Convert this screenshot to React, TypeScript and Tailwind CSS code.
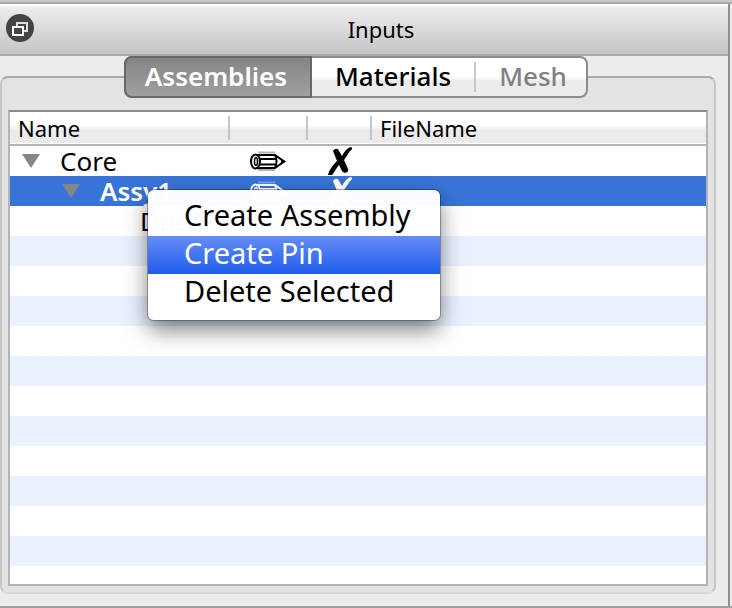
import type { ReactNode } from "react";

const headText = "text-[22px] leading-7 font-normal";

function Pencil({ className }: { className: string }) {
  return (
    <svg viewBox="0 0 36 20" className={`h-5 w-9 ${className}`} fill="none" stroke="currentColor" aria-hidden="true">
      <path d="M8 1.500H25M8 19H25" strokeWidth="2" opacity=".3" />
      <path d="M6 4H25L34 10.500L25 17H6" strokeWidth="2" />
      <path d="M9 8H26M9 13.500H26" strokeWidth="2" />
      <ellipse cx="5.500" cy="10.500" rx="4.500" ry="7" strokeWidth="2" />
      <ellipse cx="6" cy="10.500" rx="1.500" ry="4" strokeWidth="1.500" />
      <path d="M25 4Q28 10.500 25 17" strokeWidth="2" />
      <path d="M31 7.500L36 10.500L31 13.500Z" fill="currentColor" stroke="none" />
    </svg>
  );
}

function Cross({ className }: { className: string }) {
  return (
    <svg viewBox="0 0 24 28" className={`h-7 w-6 ${className}`} fill="currentColor" aria-hidden="true">
      <path d="M5 4C7 1 10 1 11 4L14 9C16 5 19 1 23 0C25 1 24 3 22 4L16 13L20 22C21 26 16 27 14 24L11 18C8 21 7 25 4 28H0C1 23 5 18 9 14Z" />
    </svg>
  );
}

function Triangle() {
  return (
    <svg viewBox="0 0 18 14" className="h-3.5 w-[18px] shrink-0 fill-[#868686]" aria-hidden="true">
      <path d="M0 0H18L9 14Z" />
    </svg>
  );
}

function HeadCell({ children, divider = true }: { children?: ReactNode; divider?: boolean }) {
  return (
    <th scope="col" className={`h-[33px] p-0 text-left ${headText}`}>
      <div className={`flex h-6 items-center ${divider ? "border-r-2 border-[#c6c6c6]" : ""}`}>
        <span className="px-2">{children}</span>
      </div>
    </th>
  );
}

const menuItem = "block h-[38px] w-full pb-1 pl-9 text-left text-[29px] leading-[34px]";

export default function App() {
  return (
    <main className="flex min-h-screen flex-col border-b-2 border-[#a0a0a0] bg-[#ececec] font-['Noto_Sans',sans-serif] text-black">
      <div className="h-1 shrink-0 border-b-2 border-[#aaaaaa] bg-[#c8c8c8]" />
      <section className="mr-0.5 flex flex-1 flex-col border-r-2 border-[#909090]">
        <header className="flex h-13 items-center border-t-2 border-b-2 border-t-white border-b-[#aaaaaa] bg-linear-to-b from-[#eeeeee] to-[#c5c5c5] pb-1 pl-1.5">
          <button aria-label="Float panel" className="size-7">
            <svg viewBox="0 0 28 28" className="size-7" fill="none" aria-hidden="true">
              <circle cx="14" cy="14" r="14" fill="#444" />
              <path d="M11 12V9H21V17H18" stroke="#ddd" strokeWidth="2" />
              <path d="M7 13H17V21H7Z" stroke="#fff" strokeWidth="2" />
            </svg>
          </button>
          <h1 className={`flex-1 pt-0.5 text-center ${headText}`}>Inputs</h1>
        </header>

        <div className="mr-3 mb-3 flex flex-1 flex-col">
          <div role="tablist" className="relative z-10 -mb-[22px] flex justify-center pr-1 text-[26px] leading-8 font-medium">
            <div className="flex h-[42px] rounded-lg border-2 border-[#8c8c8c] bg-linear-to-b from-white from-50% to-[#ececec] to-60%">
              <button role="tab" aria-selected="true" className="-m-0.5 w-[188px] rounded-l-lg border-2 border-[#686868] bg-linear-to-b from-[#858585] to-[#a0a0a0] pr-1 pb-0.5 font-semibold text-white">
                Assemblies
              </button>
              <button role="tab" aria-selected="false" className="my-1 ml-0.5 w-[164px] border-r-2 border-[#c8c8c8] pb-0.5">
                <span className="-my-1 block">Materials</span>
              </button>
              <button role="tab" aria-selected="false" disabled className="w-[110px] pb-0.5 pl-1 text-[#808080]">Mesh</button>
            </div>
          </div>

          <div className="flex flex-1 flex-col rounded-lg border-2 border-[#c6c6c6] border-t-[#a8a8a8] border-b-[#d8d8d8] bg-[#e3e3e3] px-1.5 pt-8 pb-1.5">
            <div className="relative flex-1 border-2 border-[#b4b4b4] border-t-[#8c8c8c] bg-white">
              <table className="w-full table-fixed border-collapse">
                <colgroup>
                  <col className="w-[220px]" />
                  <col className="w-[78px]" />
                  <col className="w-[64px]" />
                  <col />
                </colgroup>
                <thead>
                  <tr className="border-b-2 border-[#b4b4b4] bg-linear-to-b from-white from-40% to-[#ebebeb] to-60%">
                    <HeadCell>Name</HeadCell>
                    <HeadCell />
                    <HeadCell />
                    <HeadCell divider={false}>FileName</HeadCell>
                  </tr>
                </thead>
                <tbody className="text-[26px] leading-7">
                  <tr className="h-[30px]">
                    <td className="p-0"><div className="flex h-[30px] items-center gap-5 pl-3"><Triangle />Core</div></td>
                    <td className="p-0"><Pencil className="ml-5" /></td>
                    <td className="p-0"><Cross className="ml-5" /></td>
                    <td />
                  </tr>
                  <tr className="h-[30px] bg-[#3874d7] font-semibold text-white" aria-selected="true">
                    <td className="p-0"><div className="flex h-[30px] items-center gap-5 pl-[52px]"><Triangle />Assy1</div></td>
                    <td className="p-0"><Pencil className="ml-5" /></td>
                    <td className="p-0"><Cross className="ml-5" /></td>
                    <td />
                  </tr>
                  <tr className="h-[30px]">
                    <td className="p-0 pl-[130px]">Duct</td>
                    <td /><td /><td />
                  </tr>
                </tbody>
              </table>
              <div className="absolute inset-x-0 top-[124px] bottom-0 bg-[repeating-linear-gradient(to_bottom,#eaf1fe_0,#eaf1fe_30px,#fff_30px,#fff_60px)]" />

              <div role="menu" className="absolute top-[78px] left-[138px] w-[292px] rounded-md bg-white/98 py-2 shadow-[0_0_0_1px_rgba(0,0,0,0.3),0_10px_22px_rgba(0,0,0,0.5)]">
                <button role="menuitem" className={menuItem}>Create Assembly</button>
                <button role="menuitem" className={`${menuItem} bg-linear-to-b from-[#648cf5] to-[#1f5cec] text-white`}>Create Pin</button>
                <button role="menuitem" className={menuItem}>Delete Selected</button>
              </div>
            </div>
          </div>
        </div>
      </section>
    </main>
  );
}
